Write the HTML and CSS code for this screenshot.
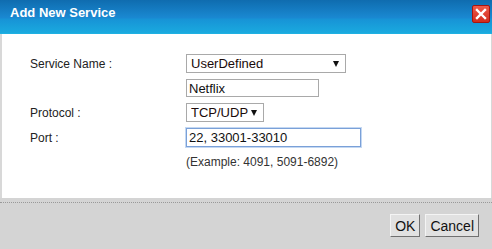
FILE: index.html
```html
<!DOCTYPE html>
<html lang="en">
<head>
    <meta charset="UTF-8">
    <title>Add New Service</title>
    <link rel="stylesheet" href="styles.css">
</head>
<body>

<div class="dialog">
    <!-- Title Bar -->
    <div class="title-bar">
        <span class="title">Add New Service</span>
        <button class="close-btn" aria-label="Close">
            <svg width="12" height="12" viewBox="0 0 12 12">
                <path d="M2 2 L10 10 M10 2 L2 10" stroke="#fff" stroke-width="2.4" stroke-linecap="square"/>
            </svg>
        </button>
    </div>

    <!-- Form -->
    <div class="dialog-body">
        <div class="form-grid">
            <label class="form-label">Service Name :</label>
            <div class="select-wrap wide">
                <select class="field-select">
                    <option>UserDefined</option>
                </select>
            </div>

            <span></span>
            <input class="field-input name" type="text" value="Netflix">

            <label class="form-label">Protocol :</label>
            <div class="select-wrap narrow">
                <select class="field-select">
                    <option>TCP/UDP</option>
                </select>
            </div>

            <label class="form-label">Port :</label>
            <input class="field-input port" type="text" value="22, 33001-33010">

            <span></span>
            <span class="hint">(Example: 4091, 5091-6892)</span>
        </div>
    </div>

    <!-- Buttons -->
    <div class="dialog-footer">
        <div class="footer-line"></div>
        <div class="buttons">
            <button class="btn">OK</button>
            <button class="btn">Cancel</button>
        </div>
    </div>
</div>

</body>
</html>
```

FILE: styles.css
```css
body {
    margin: 0;
    padding: 0;
    font-family: 'Liberation Sans', Arial, sans-serif;
    font-size: 12px;
    color: #222;
    background: #d4d4d4;
}

.dialog {
    width: 492px;
    height: 249px;
    display: flex;
    flex-direction: column;
    background: #d4d4d4;
}

.title-bar {
    height: 34px;
    display: flex;
    justify-content: space-between;
    align-items: flex-start;
    background: linear-gradient(to bottom, #0f6caf 0, #1a89d2 18px, #1793d6 19px, #1aaadf 33px, #24b6e4 34px);
}

.title {
    color: #fff;
    font-weight: bold;
    font-size: 13px;
    line-height: 14px;
    margin: 6px 0 0 10px;
}

.close-btn {
    width: 18px;
    height: 18px;
    margin: 5px 2px 0 0;
    padding: 0;
    border: 1px solid #a8150f;
    border-radius: 2px;
    background: linear-gradient(to bottom, #ee5b4a, #d22b1c);
    display: flex;
    justify-content: center;
    align-items: center;
    cursor: pointer;
}

.dialog-body {
    height: 164px;
    box-sizing: border-box;
    background: #fff;
    border-left: 2px solid #d8d8d8;
    border-right: 1px solid #d8d8d8;
    padding: 20px 0 0 28px;
}

.form-grid {
    display: grid;
    grid-template-columns: 156px auto;
    grid-auto-rows: auto;
    row-gap: 6px;
    align-items: center;
    justify-items: start;
}

.form-label {
    color: #222;
}

.select-wrap {
    position: relative;
    height: 19px;
}

.select-wrap.wide {
    width: 160px;
}

.select-wrap.narrow {
    width: 78px;
}

.select-wrap::after {
    content: "";
    position: absolute;
    right: 7px;
    top: 7px;
    border-left: 3.5px solid transparent;
    border-right: 3.5px solid transparent;
    border-top: 6px solid #111;
    pointer-events: none;
}

.field-select {
    -webkit-appearance: none;
    appearance: none;
    width: 100%;
    height: 19px;
    box-sizing: border-box;
    border: 1px solid #a9a9a9;
    background: #fff;
    font-family: 'Liberation Sans', Arial, sans-serif;
    font-size: 13px;
    color: #1a0a0a;
    padding: 0 0 0 4px;
    margin: 0;
    border-radius: 0;
}

.field-input {
    height: 18px;
    box-sizing: border-box;
    border: 1px solid #a9a9a9;
    font-family: 'Liberation Sans', Arial, sans-serif;
    font-size: 13px;
    color: #111;
    padding: 0 2px;
    margin: 0;
}

.field-input.name {
    width: 133px;
}

.field-input.port {
    width: 175px;
    height: 19px;
    border: 1px solid #7aa0d8;
    box-shadow: 0 0 0 1px #c4d8f2;
}

.hint {
    color: #333;
    font-size: 12px;
    line-height: 18px;
}

.dialog-footer {
    flex: 1;
    display: flex;
    flex-direction: column;
}

.footer-line {
    margin-top: 4px;
    border-top: 1px dotted #999;
}

.buttons {
    display: flex;
    justify-content: flex-end;
    gap: 5px;
    padding: 11px 13px 0 0;
}

.btn {
    height: 23px;
    box-sizing: border-box;
    padding: 0 4px;
    font-family: 'Liberation Sans', Arial, sans-serif;
    font-size: 14px;
    color: #111;
    background: #e1e1e1;
    border: 1px solid;
    border-color: #f4f4f4 #707070 #707070 #f4f4f4;
    cursor: pointer;
}
```
